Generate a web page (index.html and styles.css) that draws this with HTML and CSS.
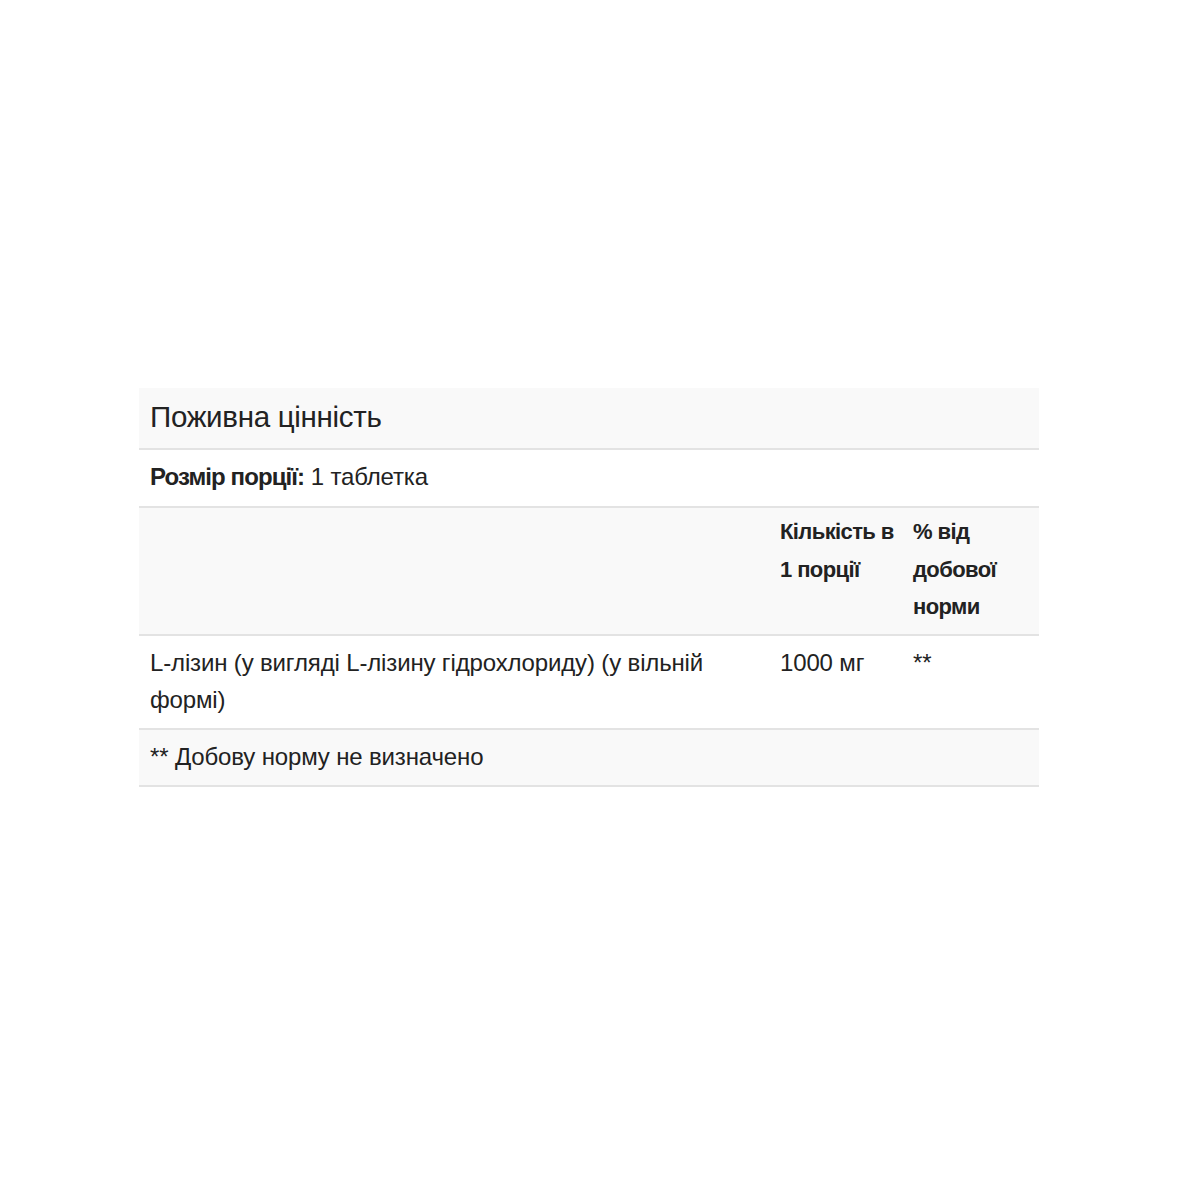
FILE: index.html
```html
<!DOCTYPE html>
<html lang="uk">
<head>
<meta charset="utf-8">
<link rel="stylesheet" href="styles.css">
</head>
<body>
<div class="page">
  <table class="facts">
    <colgroup>
      <col class="col-name">
      <col class="col-amount">
      <col class="col-dv">
    </colgroup>
    <tr class="row-title">
      <td colspan="3">Поживна цінність</td>
    </tr>
    <tr class="row-serving">
      <td colspan="3"><strong>Розмір порції:</strong> 1 таблетка</td>
    </tr>
    <tr class="row-head">
      <th></th>
      <th>Кількість в 1 порції</th>
      <th>% від добової норми</th>
    </tr>
    <tr class="row-item">
      <td>L-лізин (у вигляді L-лізину гідрохлориду) (у вільній формі)</td>
      <td>1000 мг</td>
      <td>**</td>
    </tr>
    <tr class="row-foot">
      <td colspan="3">** Добову норму не визначено</td>
    </tr>
  </table>
</div>
</body>
</html>
```
FILE: styles.css
```css
html, body {
  margin: 0;
  padding: 0;
  background: #ffffff;
}
.page {
  padding: 388px 0 0 139px;
}
.facts {
  width: 900px;
  table-layout: fixed;
  border-collapse: collapse;
  font-family: "Liberation Sans", Arial, sans-serif;
  font-size: 24px;
  line-height: 37px;
  color: #222222;
  letter-spacing: -0.15px;
}
.col-name { width: 630px; }
.col-amount { width: 133px; }
.col-dv { width: 137px; }
.facts td, .facts th {
  padding: 8px 11px 10px 11px;
  text-align: left;
  vertical-align: top;
  border-bottom: 2px solid #e3e3e3;
}
.facts strong {
  letter-spacing: -0.9px;
}
.row-title td {
  background: #f9f9f9;
  font-size: 29.5px;
  line-height: 42px;
  letter-spacing: -0.3px;
  padding: 8px 11px 10px 11px;
}
.row-serving td {
  padding-bottom: 11px;
}
.row-head th {
  background: #f9f9f9;
  font-weight: bold;
  font-size: 22px;
  letter-spacing: -0.6px;
  line-height: 37.5px;
  padding: 5px 4px 8.5px 11px;
}
.row-foot td {
  background: #f9f9f9;
}
```
